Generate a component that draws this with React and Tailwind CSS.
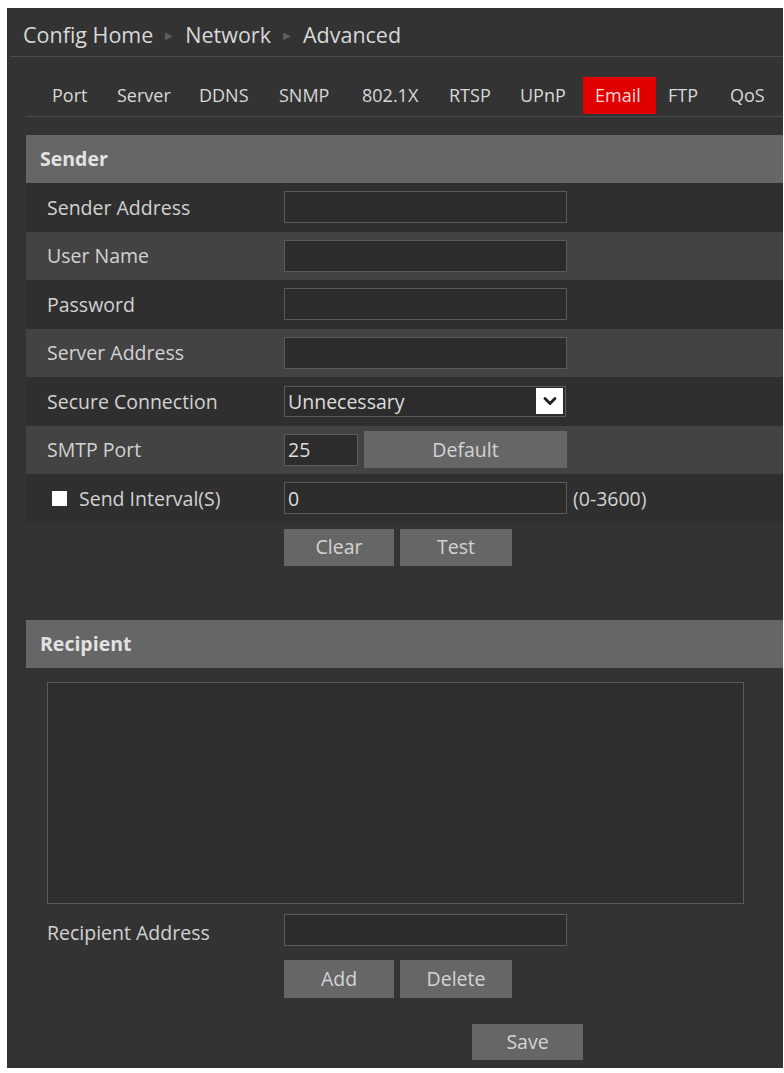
import { ChevronDown } from "lucide-react";

// [label, box width]
const tabs = [
  ["Port", 65],
  ["Server", 82],
  ["DDNS", 80],
  ["SNMP", 83],
  ["802.1X", 87],
  ["RTSP", 71],
  ["UPnP", 75],
  ["Email", 73],
  ["FTP", 62],
  ["QoS", 60],
];

function Row({ label, light, children }) {
  return (
    <div className={`flex h-[48.5px] items-center ${light ? "bg-[#434343]" : "bg-[#2f2f2f]"}`}>
      <div className="w-[258px] pl-[21px] text-[19.5px] text-[#d2d2d2]">{label}</div>
      <div className="flex items-center gap-[6px]">{children}</div>
    </div>
  );
}

function TextBox({ w = "w-[283px]", value = "" }) {
  return (
    <div className={`flex h-[32px] ${w} items-center border border-[#5a5a5a] bg-[#2c2c2c] px-[3px] text-[19.5px] text-[#dcdcdc]`}>
      {value}
    </div>
  );
}

function Btn({ w = "w-[110px]", h = "h-[37px]", children }) {
  return (
    <button className={`${w} ${h} bg-[#666] text-[19.5px] text-[#d4d4d4]`}>{children}</button>
  );
}

function Header({ children }) {
  return (
    <div className="flex h-[48px] items-center bg-[#666] pl-[14px] text-[19.5px] font-bold text-[#e2e2e2]">
      {children}
    </div>
  );
}

export default function App() {
  return (
    <div className="min-h-[1073px] bg-white pl-[7px] pt-[8px] font-['Open_Sans','Noto_Sans',sans-serif]">
      <div className="h-[1060px] w-[776px] bg-[#333]">
        {/* breadcrumb */}
        <div className="ml-[3px] flex h-[49px] items-center gap-[12px] border-b border-[#4b4b4b] pl-[13px] pt-[7px] text-[21.5px] text-[#d8d8d8]">
          <span>Config Home</span>
          <span className="text-[10px] text-[#5e5e5e]">▶</span>
          <span>Network</span>
          <span className="text-[10px] text-[#5e5e5e]">▶</span>
          <span>Advanced</span>
        </div>

        {/* tabs */}
        <div className="ml-[19px] flex h-[60px] items-end border-b border-[#4b4b4b] pb-[2px] pl-[14px] text-[18px] text-[#d8d8d8]">
          {tabs.map(([t, w]) => (
            <div
              key={t}
              style={{ width: w }}
              className={`flex h-[37px] shrink-0 items-center pl-[12px] ${t === "Email" ? "bg-[#e00000] text-[#f2dada]" : ""}`}
            >
              {t}
            </div>
          ))}
        </div>

        <div className="ml-[19px] mt-[18px]">
          <Header>Sender</Header>
          <Row label="Sender Address"><TextBox /></Row>
          <Row label="User Name" light><TextBox /></Row>
          <Row label="Password"><TextBox /></Row>
          <Row label="Server Address" light><TextBox /></Row>
          <Row label="Secure Connection">
            <div className="flex h-[31px] w-[282px] items-center justify-between border border-[#5a5a5a] bg-[#2c2c2c] pl-[3px] pr-[2px] text-[19.5px] text-[#dcdcdc]">
              <span>Unnecessary</span>
              <span className="flex h-[26px] w-[27px] items-center justify-center bg-white">
                <ChevronDown size={20} strokeWidth={3.5} className="text-[#222]" />
              </span>
            </div>
          </Row>
          <Row label="SMTP Port" light>
            <TextBox w="w-[74px]" value="25" />
            <Btn w="w-[203px]">Default</Btn>
          </Row>
          <div className="flex h-[48.5px] items-center bg-[#2f2f2f]">
            <div className="flex w-[258px] items-center gap-[12px] pl-[26px] text-[19.5px] text-[#d2d2d2]">
              <span className="h-[15px] w-[15px] shrink-0 bg-white" />
              <span>Send Interval(S)</span>
            </div>
            <TextBox value="0" />
            <span className="ml-[6px] text-[19.5px] text-[#d2d2d2]">(0-3600)</span>
          </div>
          <div className="flex h-[49px] items-center gap-[6px] pl-[258px]">
            <Btn>Clear</Btn>
            <Btn w="w-[112px]">Test</Btn>
          </div>

          <div className="mt-[48px]">
            <Header>Recipient</Header>
          </div>
          <div className="ml-[21px] mt-[14px] h-[222px] w-[697px] border border-[#5a5a5a] bg-[#2f2f2f]" />
          <div className="flex h-[51px] items-center">
            <div className="w-[258px] pl-[21px] pt-[8px] text-[19.5px] text-[#d2d2d2]">Recipient Address</div>
            <div className="pt-[2px]"><TextBox /></div>
          </div>
          <div className="mt-[5px] flex gap-[6px] pl-[258px]">
            <Btn h="h-[38px]">Add</Btn>
            <Btn w="w-[112px]" h="h-[38px]">Delete</Btn>
          </div>
          <div className="mt-[26px] flex pl-[446px]">
            <Btn w="w-[111px]" h="h-[36px]">Save</Btn>
          </div>
        </div>
      </div>
    </div>
  );
}
